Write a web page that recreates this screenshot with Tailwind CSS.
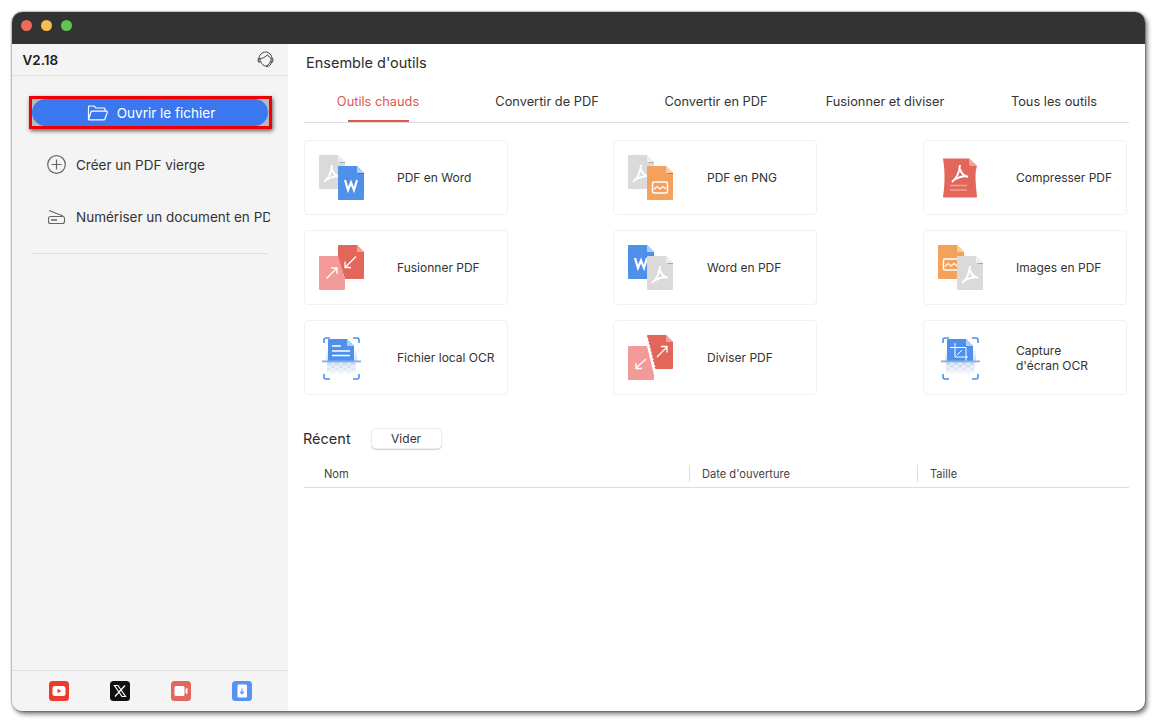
<!DOCTYPE html>
<html lang="fr">
<head>
<meta charset="utf-8">
<script src="https://cdn.jsdelivr.net/npm/@tailwindcss/browser@4"></script>
</head>
<body class="bg-white font-['Inter','Liberation_Sans',sans-serif] text-[#333]">
<svg width="0" height="0" class="absolute">
  <defs>
    <linearGradient id="glow" x1="0" y1="0" x2="0" y2="1"><stop offset="0" stop-color="#cfe0f8" stop-opacity="0"/><stop offset="1" stop-color="#cfe0f8"/></linearGradient>
    <linearGradient id="fade" x1="0" y1="0" x2="0" y2="1"><stop offset="0" stop-color="#fff" stop-opacity="0"/><stop offset="1" stop-color="#fff"/></linearGradient>
    <g id="glyph"><path d="M8 0C7.500 6 5 13 0 17M8 4C9 8 12 11 16 12M16 11.500C11 10.500 6 12.500 1 15.500" fill="none" stroke="#fff" stroke-width="2"/></g>
    <g id="gray"><path d="M1 0H19L26 7V33a1 1 0 0 1-1 1H1a1 1 0 0 1-1-1V1a1 1 0 0 1 1-1z" fill="#dadada"/><path d="M19 0L26 7H20a1 1 0 0 1-1-1z" fill="#eeeeee"/><path d="M20 7H26V8H21z" fill="#aaa"/><use href="#glyph" x="5" y="10"/></g>
    <g id="word"><path d="M1 0H19L26 7V33a1 1 0 0 1-1 1H1a1 1 0 0 1-1-1V1a1 1 0 0 1 1-1z" fill="#4f90ea"/><path d="M19 0L26 7H20a1 1 0 0 1-1-1z" fill="#a9d2f8"/><path d="M20 7H26V8H21z" fill="#3a6fb8"/><path d="M7 14L10 24L13 16.500L16 24L19 14" fill="none" stroke="#fff" stroke-width="2.200"/></g>
    <g id="img"><path d="M1 0H19L26 7V33a1 1 0 0 1-1 1H1a1 1 0 0 1-1-1V1a1 1 0 0 1 1-1z" fill="#f3a25d"/><path d="M19 0L26 7H20a1 1 0 0 1-1-1z" fill="#f8cf9f"/><path d="M20 7H26V8H21z" fill="#b87a45"/><rect x="5.500" y="16" width="15" height="11" rx="1.500" fill="none" stroke="#fff" stroke-width="1.400"/><path d="M7 23.500L10 20.500L13 23L16 20.500L19 23" fill="none" stroke="#fff" stroke-width="1.200"/></g>
    <g id="wordleft"><path d="M1 0H19L26 7V33a1 1 0 0 1-1 1H1a1 1 0 0 1-1-1V1a1 1 0 0 1 1-1z" fill="#4f90ea"/><path d="M19 0L26 7H20a1 1 0 0 1-1-1z" fill="#a9d2f8"/><path d="M7 13L10 23L13 15.500L16 23L19 13" fill="none" stroke="#fff" stroke-width="2.200"/></g>
    <g id="imgleft"><path d="M1 0H19L26 7V33a1 1 0 0 1-1 1H1a1 1 0 0 1-1-1V1a1 1 0 0 1 1-1z" fill="#f3a25d"/><path d="M19 0L26 7H20a1 1 0 0 1-1-1z" fill="#f8cf9f"/><rect x="5.500" y="14" width="15" height="11" rx="1.500" fill="none" stroke="#fff" stroke-width="1.400"/><path d="M7 21.500L10 18.500L13 21L16 18.500L19 21" fill="none" stroke="#fff" stroke-width="1.200"/></g>
    <g id="checks">
      <rect x="0" y="0" width="29" height="14" fill="#dbe6f5"/>
      <path d="M0 0h4v3H0zM8 0h4v3H8zM16 0h4v3h-4zM24 0h4v3h-4zM4 3h4v3H4zM12 3h4v3h-4zM20 3h4v3h-4zM0 6h4v3H0zM8 6h4v3H8zM16 6h4v3h-4zM24 6h4v3h-4zM4 9h4v3H4zM12 9h4v3h-4zM20 9h4v3h-4z" fill="#c3d3ea"/>
      <rect x="0" y="0" width="29" height="14" fill="url(#fade)"/>
    </g>
    <g id="brackets"><path d="M5 8V5a2 2 0 0 1 2-2H11M34 3H38a2 2 0 0 1 2 2V8M40 39V42a2 2 0 0 1-2 2H34M11 44H7a2 2 0 0 1-2-2V39" fill="none" stroke="#4f90ea" stroke-width="1.600"/><rect x="3" y="25.500" width="39" height="1.800" fill="#7fb0ef"/></g>
  </defs>
</svg>

<div class="p-[12px] pr-[13px] h-[723px] w-[1158px]">
  <div class="w-[1133px] h-[699px] rounded-[10px] overflow-hidden flex flex-col bg-white shadow-[0_0_2px_rgba(0,0,0,0.7),2px_3px_5px_rgba(0,0,0,0.55)]">
    <div class="h-[32px] shrink-0 bg-[#333333] flex items-center gap-[9px] pl-[9px] pb-[5px]">
      <span class="w-[11px] h-[11px] rounded-full bg-[#ed6a5e]"></span>
      <span class="w-[11px] h-[11px] rounded-full bg-[#f4bf4f]"></span>
      <span class="w-[11px] h-[11px] rounded-full bg-[#61c554]"></span>
    </div>
    <div class="flex flex-1 min-h-0">
      <aside class="w-[276px] shrink-0 bg-[#f4f4f4] flex flex-col">
        <div class="h-[32px] shrink-0 border-b border-[#e2e2e2] flex items-center justify-between pl-[10.500px] pr-[14px] pt-[1px]">
          <span class="text-[13.500px] font-semibold text-[#222]">V2.18</span>
          <svg class="w-[17px] h-[17px] -mt-[1px]" viewBox="0 0 17 17" fill="none" stroke="#444" stroke-width="1"><path d="M2 8C2 4 5 1 8.500 1S15 4 15 8"/><path d="M2.500 8C5 7.500 8.500 6 10.500 3.800C11.500 5.500 13 6.800 14.500 7.500"/><path d="M1.200 7.500V11H3V7.500zM15.800 7.500V11H14V7.500z"/><path d="M3.500 10C4.500 13.500 7 15 8.500 15C10 15 12.500 13.500 13.500 10"/><path d="M14.500 11C14 14 12 15.500 9 15.800"/></svg>
        </div>
        <div class="flex-1 flex flex-col">
          <div class="mt-[20px] ml-[17px] w-[243px] h-[33px] border-[3px] border-[#f00000] bg-[#b9b9b9] shadow-[1px_2px_4px_rgba(0,0,0,0.6)]">
            <button class="w-[236px] h-full rounded-full bg-[#3b78f0] text-white flex items-center justify-center gap-[9px] text-[13.500px] pl-[2px]">
              <svg class="w-[21px] h-[16px]" viewBox="0 0 21 16" fill="none" stroke="#fff" stroke-width="1.200"><path d="M1.500 14.500V2a1 1 0 0 1 1-1H7L9 3H17a1 1 0 0 1 1 1V6"/><path d="M1.500 14.500L4 7a1 1 0 0 1 1-.8H19.500a.8.8 0 0 1 .8 1L18 14a1 1 0 0 1-1 .8H2z"/></svg>
              <span class="pt-[2px]">Ouvrir le fichier</span>
            </button>
          </div>
          <div class="mt-[22px] ml-[35px] h-[26px] flex items-center gap-[10px] text-[13.500px]">
            <svg class="w-[19px] h-[19px] shrink-0" viewBox="0 0 19 19" fill="none" stroke="#666" stroke-width="1.200"><circle cx="9.500" cy="9.500" r="8.800"/><path d="M9.500 4.500V14.500M4.500 9.500H14.500"/></svg>
            <span class="pt-[2px]">Créer un PDF vierge</span>
          </div>
          <div class="mt-[26px] ml-[35px] h-[26px] w-[223px] overflow-hidden flex items-center gap-[10px] text-[13.500px] whitespace-nowrap">
            <svg class="w-[19px] h-[19px] shrink-0" viewBox="0 0 19 19" fill="none" stroke="#666" stroke-width="1.100"><path d="M2 3.500L16 9"/><rect x="1.500" y="9.500" width="16" height="7" rx="2"/><path d="M4 13H10" stroke-width="1.500"/></svg>
            <span class="pt-[2px]">Numériser un document en PDF</span>
          </div>
          <div class="mt-[24px] mx-[20px] h-px bg-[#dedede]"></div>
          <div class="flex-1"></div>
          <div class="h-[41px] border-t border-[#dddddd] flex items-center pl-[37px] gap-[41px] pb-[1px]">
            <svg class="w-[20px] h-[20px]" viewBox="0 0 20 20"><rect width="20" height="20" rx="3.500" fill="#ee3b30"/><rect x="3.500" y="5" width="13" height="10" rx="2.500" fill="#fff"/><path d="M8.500 7.800L12.500 10L8.500 12.200z" fill="#ee3b30"/></svg>
            <svg class="w-[20px] h-[20px]" viewBox="0 0 20 20"><rect width="20" height="20" rx="3.500" fill="#111"/><path d="M4.500 4.500H8L15.500 15.500H12zM15 4.500L5 15.500" fill="none" stroke="#fff" stroke-width="1.200"/></svg>
            <svg class="w-[20px] h-[20px]" viewBox="0 0 20 20"><rect width="20" height="20" rx="3.500" fill="#e2675c"/><rect x="3.500" y="5" width="10" height="10" rx="1.500" fill="#fff"/><path d="M14.500 8L16.500 6.800V13.200L14.500 12z" fill="#fff"/></svg>
            <svg class="w-[20px] h-[20px]" viewBox="0 0 20 20"><rect width="20" height="20" rx="3.500" fill="#5594f5"/><rect x="5.500" y="3.500" width="9.500" height="13" rx="1.200" fill="#fff"/><path d="M10 7.500V12M8 10.500L10 12.800L12 10.500" fill="none" stroke="#5594f5" stroke-width="1.100"/></svg>
          </div>
        </div>
      </aside>

      <main class="flex-1 min-w-0 pl-[16px] pr-[16px]">
        <div class="h-[28px] pt-[10px] pl-[2px] text-[14.500px] leading-[18px] text-[#2b2b2b]">Ensemble d'outils</div>
        <div class="h-[51px] border-b border-[#dcdcdc]">
          <div class="w-[845px] -ml-[10.500px] grid grid-cols-5 text-[12.800px] leading-[18px] text-center">
            <div class="h-[50px] pt-[21px] flex flex-col items-center justify-between text-[#e2574c]"><span>Outils chauds</span><span class="w-[61px] h-[2px] bg-[#e2574c]"></span></div>
            <div class="pt-[21px]">Convertir de PDF</div>
            <div class="pt-[21px]">Convertir en PDF</div>
            <div class="pt-[21px]">Fusionner et diviser</div>
            <div class="pt-[21px]">Tous les outils</div>
          </div>
        </div>

        <div class="mt-[17px] grid grid-cols-[309px_310px_204px] gap-y-[15px] text-[12px] text-[#333]">
          <div class="w-[204px] h-[75px] rounded-[4px] border border-[#f1f1f1] flex items-center pl-[14px]">
            <svg class="w-[46px] h-[46px] shrink-0" viewBox="0 0 46 46"><use href="#gray"/><use href="#word" x="19" y="11"/></svg>
            <span class="ml-[32px] pt-[1px]">PDF en Word</span>
          </div>
          <div class="w-[204px] h-[75px] rounded-[4px] border border-[#f1f1f1] flex items-center pl-[14px]">
            <svg class="w-[46px] h-[46px] shrink-0" viewBox="0 0 46 46"><use href="#gray"/><use href="#img" x="19" y="11"/></svg>
            <span class="ml-[33px] pt-[1px]">PDF en PNG</span>
          </div>
          <div class="w-[204px] h-[75px] rounded-[4px] border border-[#f1f1f1] flex items-center pl-[14px]">
            <svg class="w-[46px] h-[46px] shrink-0" viewBox="0 0 46 46"><path d="M5 3.500H31L39 11C37 17 37 24 39 41.500a1 1 0 0 1-1 1H6a1 1 0 0 1-1-1C7 30 7 15 5 3.500z" fill="#e2675a"/><path d="M31 3.500L39 11H33a2 2 0 0 1-2-2z" fill="#f2a19a"/><use href="#glyph" x="14" y="10"/><path d="M12 30.500H29M12 35H29" stroke="#f2a19a" stroke-width="1.500"/></svg>
            <span class="ml-[32px] pt-[1px]">Compresser PDF</span>
          </div>

          <div class="w-[204px] h-[75px] rounded-[4px] border border-[#f1f1f1] flex items-center pl-[14px]">
            <svg class="w-[46px] h-[46px] shrink-0" viewBox="0 0 46 46"><path d="M1 11H24C22 20 24 30 26 34V44a1 1 0 0 1-1 1H1a1 1 0 0 1-1-1V12a1 1 0 0 1 1-1z" fill="#f29a97"/><path d="M20 0H38L45 7V33a1 1 0 0 1-1 1H26C24 28 22 20 19 11V1a1 1 0 0 1 1-1z" fill="#e2675a"/><path d="M38 0L45 7H39a1 1 0 0 1-1-1z" fill="#f2a19a"/><path d="M7.500 33.500L18 23M12 23H18V29M37 11.500L26 22.500M26 16.500V22.500H32" fill="none" stroke="#fff" stroke-width="1.300"/></svg>
            <span class="ml-[32px] pt-[1px]">Fusionner PDF</span>
          </div>
          <div class="w-[204px] h-[75px] rounded-[4px] border border-[#f1f1f1] flex items-center pl-[14px]">
            <svg class="w-[46px] h-[46px] shrink-0" viewBox="0 0 46 46"><use href="#wordleft"/><use href="#gray" x="19" y="11"/></svg>
            <span class="ml-[33px] pt-[1px]">Word en PDF</span>
          </div>
          <div class="w-[204px] h-[75px] rounded-[4px] border border-[#f1f1f1] flex items-center pl-[14px]">
            <svg class="w-[46px] h-[46px] shrink-0" viewBox="0 0 46 46"><use href="#imgleft"/><use href="#gray" x="19" y="11"/></svg>
            <span class="ml-[32px] pt-[1px]">Images en PDF</span>
          </div>

          <div class="w-[204px] h-[75px] rounded-[4px] border border-[#f1f1f1] flex items-center pl-[14px]">
            <svg class="w-[46px] h-[46px] shrink-0" viewBox="0 0 46 46"><rect x="7" y="13" width="31" height="13" fill="url(#glow)"/><use href="#checks" x="8" y="27"/><path d="M10 4H28L35 11V26H9V5a1 1 0 0 1 1-1z" fill="#4f90ea"/><path d="M28 4L35 11H29a1 1 0 0 1-1-1z" fill="#a9d2f8"/><path d="M13 11H22M13 16H31M13 20.500H31" stroke="#fff" stroke-width="1.400"/><use href="#brackets"/></svg>
            <span class="ml-[32px] pt-[1px]">Fichier local OCR</span>
          </div>
          <div class="w-[204px] h-[75px] rounded-[4px] border border-[#f1f1f1] flex items-center pl-[14px]">
            <svg class="w-[46px] h-[46px] shrink-0" viewBox="0 0 46 46"><path d="M1 11H19L26 40V44a1 1 0 0 1-1 1H1a1 1 0 0 1-1-1V12a1 1 0 0 1 1-1z" fill="#f29a97"/><path d="M20 0H38L45 7V33a1 1 0 0 1-1 1H27L19 1a1 1 0 0 1 1-1z" fill="#e2675a"/><path d="M38 0L45 7H39a1 1 0 0 1-1-1z" fill="#f2a19a"/><path d="M19 3L27 34" stroke="#fff" stroke-width="1.800" stroke-dasharray="2 1.500"/><path d="M8 33L18 24M8 28V33.500H14M29 22L39 12M33 11.500H39V17.500" fill="none" stroke="#fff" stroke-width="1.300"/></svg>
            <span class="ml-[33px] pt-[1px]">Diviser PDF</span>
          </div>
          <div class="w-[204px] h-[75px] rounded-[4px] border border-[#f1f1f1] flex items-center pl-[14px]">
            <svg class="w-[46px] h-[46px] shrink-0" viewBox="0 0 46 46"><rect x="7" y="13" width="31" height="13" fill="url(#glow)"/><use href="#checks" x="8" y="27"/><path d="M10 4H28L35 11V26H9V5a1 1 0 0 1 1-1z" fill="#4f90ea"/><path d="M28 4L35 11H29a1 1 0 0 1-1-1z" fill="#a9d2f8"/><path d="M12 12.500H28V26M17 8V22H30M19 20L24 15" fill="none" stroke="#fff" stroke-width="1"/><use href="#brackets"/></svg>
            <span class="ml-[32px] leading-[15px]">Capture<br>d'écran OCR</span>
          </div>
        </div>

        <div class="mt-[33px] h-[21px] flex items-center">
          <span class="text-[14.500px] -ml-px text-[#2b2b2b]">Récent</span>
          <button class="ml-[20px] w-[71px] h-[21px] rounded-[5px] border border-[#eeeeee] bg-white shadow-[0_1px_1px_rgba(0,0,0,0.18)] text-[12px] pt-[1px]">Vider</button>
        </div>
        <div class="h-[39px] border-b border-[#dcdcdc] flex text-[11.100px] text-[#444]">
          <div class="w-[385px] pl-[20px] pt-[16px] leading-[18px]">Nom</div>
          <div class="w-[228px] pl-[13px] pt-[16px] leading-[18px] relative"><span class="absolute left-0 top-[16px] w-px h-[17px] bg-[#dddddd]"></span>Date d'ouverture</div>
          <div class="pl-[13px] pt-[16px] leading-[18px] relative"><span class="absolute left-0 top-[16px] w-px h-[17px] bg-[#dddddd]"></span>Taille</div>
        </div>
      </main>
    </div>
  </div>
</div>
</body>
</html>
